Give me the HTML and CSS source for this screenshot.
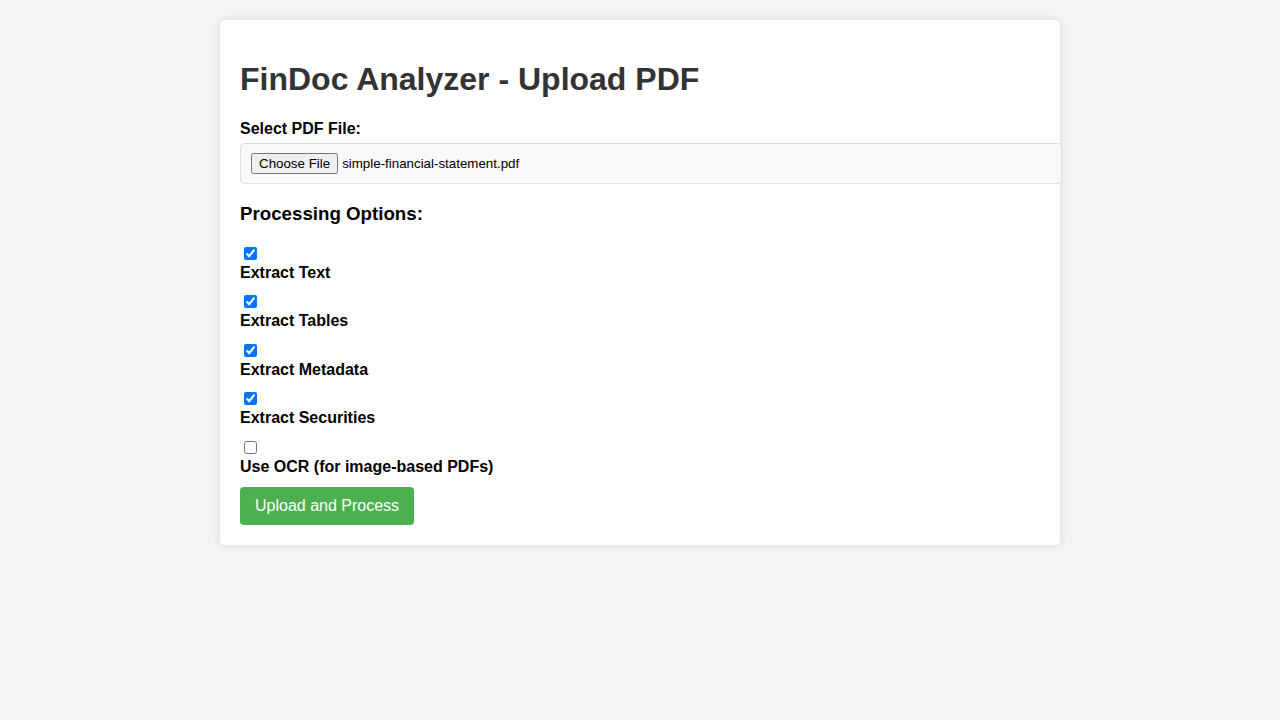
FILE: index.html
```html
<!DOCTYPE html>
<html lang="en">
<head>
<meta charset="utf-8">
<title>FinDoc Analyzer - Upload PDF</title>
<link rel="stylesheet" href="styles.css">
</head>
<body>
<div class="container">
  <h1 class="title">FinDoc Analyzer - Upload PDF</h1>
  <form class="upload-form" onsubmit="return false;">
    <div class="form-group">
      <label class="field-label">Select PDF File:</label>
      <div class="file-input">
        <button type="button" class="file-button">Choose File</button>
        <span class="file-name">simple-financial-statement.pdf</span>
      </div>
    </div>
    <h3 class="section-title">Processing Options:</h3>
    <div class="option">
      <input type="checkbox" class="option-check" id="opt-text" checked>
      <label class="field-label option-label" for="opt-text">Extract Text</label>
    </div>
    <div class="option">
      <input type="checkbox" class="option-check" id="opt-tables" checked>
      <label class="field-label option-label" for="opt-tables">Extract Tables</label>
    </div>
    <div class="option">
      <input type="checkbox" class="option-check" id="opt-meta" checked>
      <label class="field-label option-label" for="opt-meta">Extract Metadata</label>
    </div>
    <div class="option">
      <input type="checkbox" class="option-check" id="opt-sec" checked>
      <label class="field-label option-label" for="opt-sec">Extract Securities</label>
    </div>
    <div class="option">
      <input type="checkbox" class="option-check" id="opt-ocr">
      <label class="field-label option-label" for="opt-ocr">Use OCR (for image-based PDFs)</label>
    </div>
    <button type="submit" class="submit-button">Upload and Process</button>
  </form>
</div>
</body>
</html>
```
FILE: styles.css
```css
html, body {
  margin: 0;
}
body {
  font-family: "Liberation Sans", Arial, sans-serif;
  line-height: 1.15;
  background: #f4f4f4;
  padding: 20px;
  color: #000;
}
.container {
  max-width: 800px;
  margin: 0 auto;
  background: #fff;
  padding: 20px;
  border-radius: 5px;
  box-shadow: 0 0 10px rgba(0, 0, 0, 0.1);
}
.title {
  font-size: 32px;
  font-weight: bold;
  color: #333;
  margin: 21.44px 0;
}
.upload-form {
  margin: 0;
}
.form-group {
  margin-bottom: 15px;
}
.field-label {
  display: block;
  font-weight: bold;
  font-size: 16px;
  margin-bottom: 5px;
}
.file-input {
  display: flex;
  align-items: center;
  height: 19px;
  padding: 10px;
  border: 1px solid #ddd;
  border-radius: 4px;
  background: #f9f9f9;
  width: 100%;
}
.file-button {
  font-family: "Liberation Sans", Arial, sans-serif;
  font-size: 13.333px;
  height: 21px;
  flex-shrink: 0;
  margin: 0 4px 0 0;
}
.file-name {
  font-size: 13.333px;
  white-space: nowrap;
}
.section-title {
  font-size: 18.72px;
  font-weight: bold;
  margin: 18.72px 0;
}
.option {
  display: flex;
  flex-direction: column;
  align-items: flex-start;
  margin-bottom: 9px;
}
.option-check {
  margin: 4px 3px 4px 4px;
  width: 13px;
  height: 13px;
}
.option-label {
  margin-bottom: 0;
}
.submit-button {
  font-family: "Liberation Sans", Arial, sans-serif;
  font-size: 16px;
  line-height: 1.15;
  background: #4caf50;
  color: #fff;
  border: none;
  border-radius: 4px;
  padding: 10px 15px;
  margin-top: 11px;
  cursor: pointer;
  display: block;
}
```
